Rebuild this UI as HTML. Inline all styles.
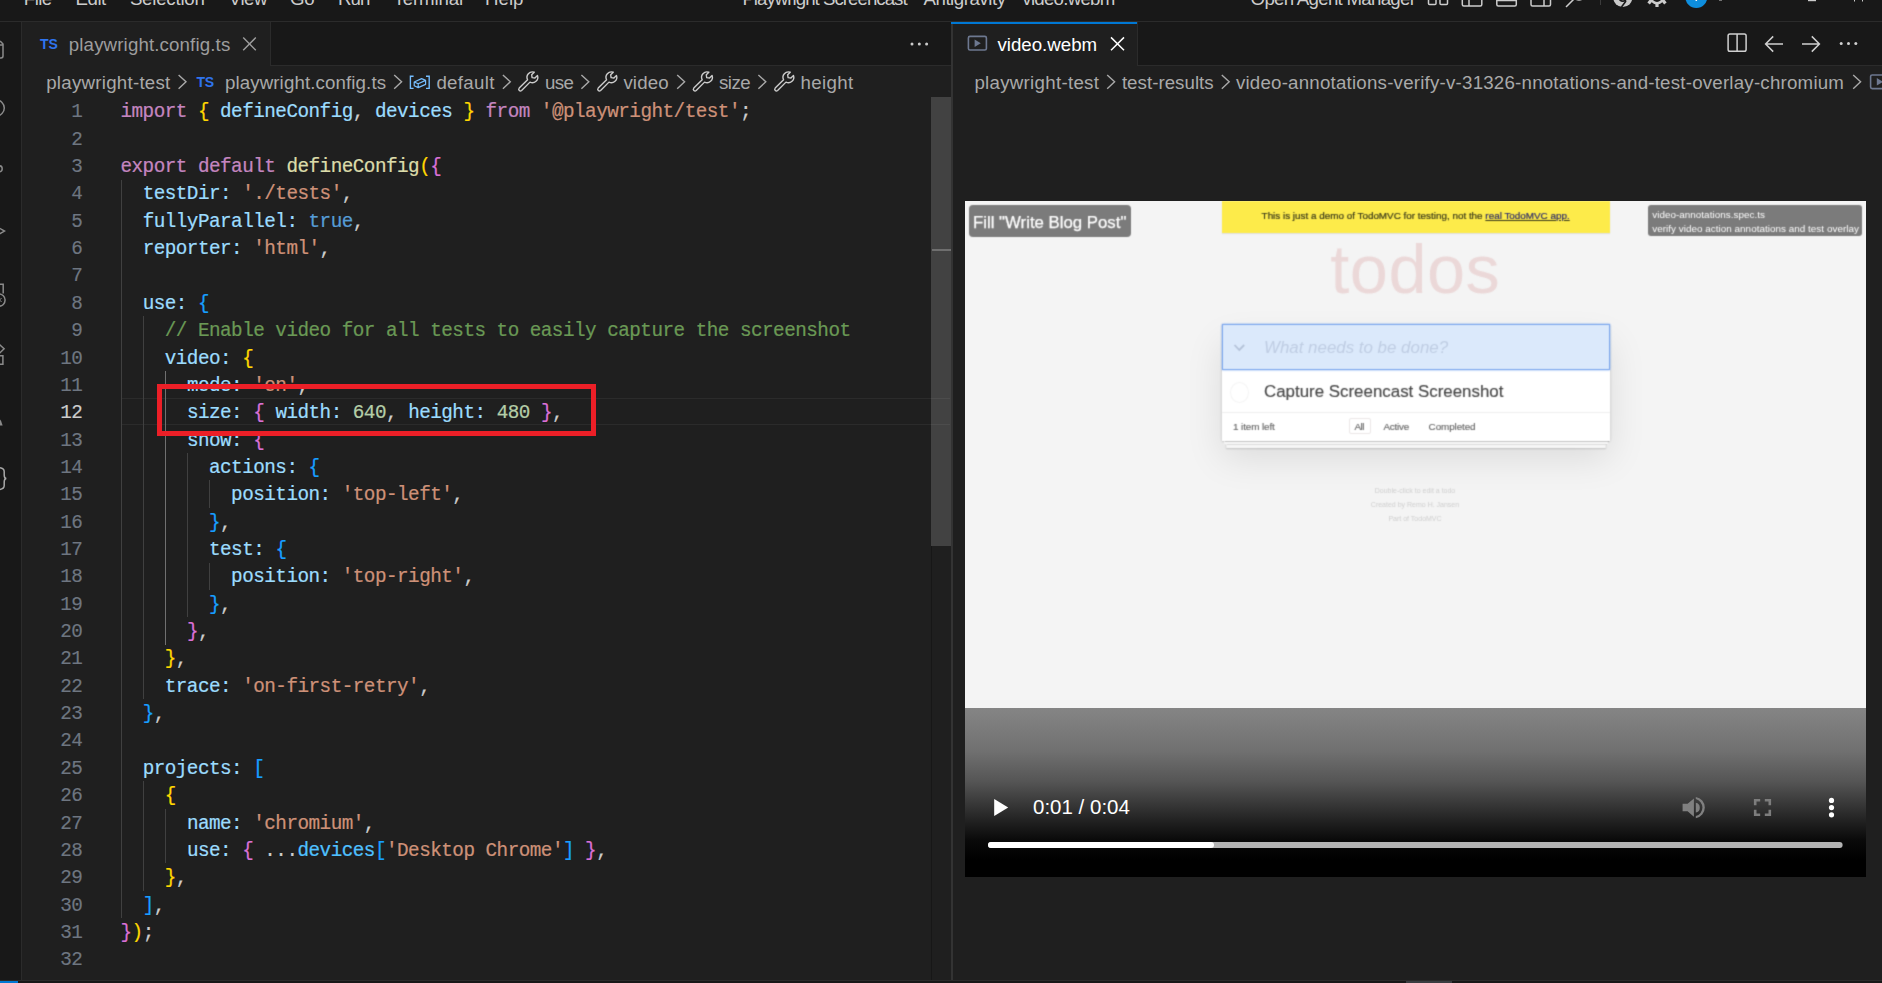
<!DOCTYPE html>
<html><head><meta charset="utf-8">
<style>
*{box-sizing:border-box;margin:0;padding:0}
html,body{width:1882px;height:983px;overflow:hidden;background:#1f1f1f}
body{position:relative;font-family:"Liberation Sans",sans-serif;color:#cccccc}
.abs{position:absolute}
.ui{position:absolute;white-space:pre;font-size:18.7px;line-height:24px;color:#cccccc}
/* chrome */
#titlebar{left:0;top:0;width:1882px;height:22px;background:#181818;border-bottom:1px solid #2b2b2b}
#activity{left:0;top:22px;width:22px;height:958px;background:#181818;border-right:1px solid #2b2b2b}
#tabsL{left:22px;top:22px;width:929px;height:44px;background:#181818;border-bottom:1px solid #2b2b2b}
#tabsR{left:953px;top:22px;width:929px;height:44px;background:#181818;border-bottom:1px solid #2b2b2b}
#sep{left:951px;top:22px;width:2px;height:958px;background:#333333}
#statusbar{left:0;top:980px;width:1882px;height:3px;background:#181818;border-top:1px solid #2b2b2b}
#remote{left:0;top:981px;width:18px;height:2px;background:#0078d4}
.tab{position:absolute;top:0;height:44px;background:#1f1f1f;border-right:1px solid #2b2b2b}
/* code */
.ln{-webkit-text-stroke:0.15px;position:absolute;left:40px;width:42.3px;text-align:right;font-family:"Liberation Mono",monospace;font-size:19.3px;letter-spacing:-0.51px;line-height:27.355px;height:27.355px;color:#6e7681;white-space:pre}
.ln.cur{color:#cccccc}
.cl{-webkit-text-stroke:0.22px;position:absolute;left:120.5px;font-family:"Liberation Mono",monospace;font-size:19.3px;letter-spacing:-0.51px;line-height:27.355px;height:27.355px;white-space:pre;color:#cccccc}
.tb{top:-13px;color:#cccccc}
.vt{white-space:pre;font-family:"Liberation Sans",sans-serif}
.ig{position:absolute;width:1px;background:#404040}
.ig.act{background:#707070}
</style></head><body>
<div id="titlebar" class="abs"></div>

<!-- title bar text (cropped) -->
<div id="tbtext" class="abs" style="left:0;top:0;width:1882px;height:21px;overflow:hidden">
 <svg class="abs" style="left:1420px;top:-12px" width="462" height="24" viewBox="1420 -12 462 24" fill="none" stroke="#cccccc" stroke-width="1.5">
  <rect x="1428.5" y="-6" width="7.5" height="10.5" rx="1"/><rect x="1440" y="-6" width="7.5" height="10.5" rx="1"/>
  <rect x="1462.3" y="-10" width="19.5" height="16" rx="1.5"/><line x1="1469" y1="-10" x2="1469" y2="6"/>
  <rect x="1496.8" y="-10" width="19.5" height="16" rx="1.5"/><line x1="1497" y1="0.5" x2="1516" y2="0.5"/>
  <rect x="1531" y="-10" width="19.5" height="16" rx="1.5"/><line x1="1544" y1="-10" x2="1544" y2="6"/>
  <line x1="1566" y1="7" x2="1574" y2="-1"/><circle cx="1579" cy="-6" r="6"/>
  <line x1="1600.5" y1="-12" x2="1600.5" y2="5" stroke="#3c3c3c" stroke-width="1"/>
  <circle cx="1622.8" cy="-2.6" r="9.6" fill="#c8c8c8" stroke="none"/><circle cx="1622.8" cy="-2.6" r="4.6" fill="#181818" stroke="none"/><circle cx="1622.8" cy="-2.6" r="2.8" fill="#c8c8c8" stroke="none"/><path d="M1626 1 L1621.5 7" stroke="#181818" stroke-width="1.6"/>
  <circle cx="1657" cy="-3" r="6.2" stroke-width="2.6"/><g stroke-width="3.2"><line x1="1657" y1="3" x2="1657" y2="7"/><line x1="1651.2" y1="0.2" x2="1648.6" y2="3.4"/><line x1="1662.8" y1="0.2" x2="1665.4" y2="3.4"/></g>
  <circle cx="1696.3" cy="-3" r="11" fill="#0e8ede" stroke="none"/>
  <line x1="1696.3" y1="-3" x2="1696.3" y2="1" stroke="#fff" stroke-width="1.5"/>
  <line x1="1719" y1="0" x2="1722" y2="0" stroke-width="1"/>
  <line x1="1808" y1="0.5" x2="1816" y2="0.5" stroke-width="1.4"/>
  <line x1="1854.5" y1="-3" x2="1854.5" y2="1.5" stroke-width="1"/><line x1="1862.5" y1="-3" x2="1862.5" y2="1.5" stroke-width="1"/>
 </svg>
</div>
<div id="activity" class="abs"></div>
<div id="tabsL" class="abs"></div>
<div id="tabsR" class="abs"></div>
<div id="sep" class="abs"></div>

<!-- tabs -->
<div class="abs" style="left:22px;top:22px;width:249px;height:44px;background:#1f1f1f;border-right:1px solid #2b2b2b"></div>
<div class="abs" style="left:953px;top:22px;width:185px;height:44px;background:#1f1f1f;border-right:1px solid #2b2b2b"></div>
<div class="abs" style="left:951px;top:22px;width:186px;height:2px;background:#0078d4;z-index:3"></div>
<span class="ui" style="left:23.8px;top:-13.5px;font-size:18.7px;color:#cccccc;letter-spacing:-0.556px;">File</span>
<span class="ui" style="left:75.4px;top:-13.5px;font-size:18.7px;color:#cccccc;letter-spacing:-0.426px;">Edit</span>
<span class="ui" style="left:129.9px;top:-13.5px;font-size:18.7px;color:#cccccc;letter-spacing:-0.232px;">Selection</span>
<span class="ui" style="left:228.8px;top:-13.5px;font-size:18.7px;color:#cccccc;letter-spacing:-0.518px;">View</span>
<span class="ui" style="left:289.9px;top:-13.5px;font-size:18.7px;color:#cccccc;letter-spacing:-0.069px;">Go</span>
<span class="ui" style="left:337.9px;top:-13.5px;font-size:18.7px;color:#cccccc;letter-spacing:-0.832px;">Run</span>
<span class="ui" style="left:393.6px;top:-13.5px;font-size:18.7px;color:#cccccc;letter-spacing:-0.166px;">Terminal</span>
<span class="ui" style="left:485.1px;top:-13.5px;font-size:18.7px;color:#cccccc;letter-spacing:-0.009px;">Help</span>
<span class="ui" style="left:742.4px;top:-13.5px;font-size:18.7px;color:#cccccc;letter-spacing:-0.981px;">Playwright Screencast</span>
<span class="ui" style="left:923.5px;top:-13.5px;font-size:18.7px;color:#cccccc;letter-spacing:-0.477px;">Antigravity</span>
<span class="ui" style="left:1022.3px;top:-13.5px;font-size:18.7px;color:#cccccc;letter-spacing:-0.742px;">video.webm</span>
<span class="ui" style="left:1250.6px;top:-13.5px;font-size:18.7px;color:#cccccc;letter-spacing:-0.726px;">Open Agent Manager</span>
<span class="ui" style="left:39.9px;top:31.5px;font-size:14px;color:#2f74ee;letter-spacing:-0.045px;font-weight:700">TS</span>
<span class="ui" style="left:68.8px;top:32.8px;font-size:18.7px;color:#9d9d9d;letter-spacing:0.134px;">playwright.config.ts</span>
<span class="ui" style="left:46.2px;top:71px;font-size:18.7px;color:#a9a9a9;letter-spacing:0.261px;">playwright-test</span>
<span class="ui" style="left:196.4px;top:70.3px;font-size:14px;color:#2f74ee;letter-spacing:-0.295px;font-weight:700">TS</span>
<span class="ui" style="left:224.9px;top:71px;font-size:18.7px;color:#a9a9a9;letter-spacing:0.119px;">playwright.config.ts</span>
<span class="ui" style="left:436.4px;top:71px;font-size:18.7px;color:#a9a9a9;letter-spacing:0.313px;">default</span>
<span class="ui" style="left:544.9px;top:71px;font-size:18.7px;color:#a9a9a9;letter-spacing:-0.614px;">use</span>
<span class="ui" style="left:623.4px;top:71px;font-size:18.7px;color:#a9a9a9;letter-spacing:0.122px;">video</span>
<span class="ui" style="left:718.9px;top:71px;font-size:18.7px;color:#a9a9a9;letter-spacing:-0.484px;">size</span>
<span class="ui" style="left:800.4px;top:71px;font-size:18.7px;color:#a9a9a9;letter-spacing:0.396px;">height</span>
<span class="ui" style="left:997.4px;top:32.8px;font-size:18.7px;color:#ffffff;letter-spacing:0.008px;">video.webm</span>
<span class="ui" style="left:974.4px;top:71px;font-size:18.7px;color:#a9a9a9;letter-spacing:0.288px;">playwright-test</span>
<span class="ui" style="left:1121.9px;top:71px;font-size:18.7px;color:#a9a9a9;letter-spacing:0.034px;">test-results</span>
<span class="ui" style="left:1235.9px;top:71px;font-size:18.7px;color:#a9a9a9;letter-spacing:0.220px;">video-annotations-verify-v-31326-nnotations-and-test-overlay-chromium</span>
<svg class="abs" style="left:0;top:0;pointer-events:none" width="1882" height="100" viewBox="0 0 1882 100" fill="none" stroke-linecap="butt" stroke-linejoin="miter">
<!-- left tab close + more -->
<path d="M243.2 37.6 L255.8 50.2 M255.8 37.6 L243.2 50.2" stroke="#9d9d9d" stroke-width="1.4"/>
<g fill="#cccccc"><circle cx="912" cy="44" r="1.5"/><circle cx="919.3" cy="44" r="1.5"/><circle cx="926.6" cy="44" r="1.5"/></g>
<!-- left breadcrumbs -->
<g transform="translate(178,74.5)"><polyline points="0.6,0.4 8,7.3 0.6,14.2" stroke="#a9a9a9" stroke-width="1.4" fill="none"/></g>
<g transform="translate(393.6,74.5)"><polyline points="0.6,0.4 8,7.3 0.6,14.2" stroke="#a9a9a9" stroke-width="1.4" fill="none"/></g>
<g transform="translate(502.3,74.5)"><polyline points="0.6,0.4 8,7.3 0.6,14.2" stroke="#a9a9a9" stroke-width="1.4" fill="none"/></g>
<g transform="translate(580.8,74.5)"><polyline points="0.6,0.4 8,7.3 0.6,14.2" stroke="#a9a9a9" stroke-width="1.4" fill="none"/></g>
<g transform="translate(676.6,74.5)"><polyline points="0.6,0.4 8,7.3 0.6,14.2" stroke="#a9a9a9" stroke-width="1.4" fill="none"/></g>
<g transform="translate(757.8,74.5)"><polyline points="0.6,0.4 8,7.3 0.6,14.2" stroke="#a9a9a9" stroke-width="1.4" fill="none"/></g>
<g stroke="#75beff" stroke-width="1.4" fill="none">
 <path d="M413.6 76.3 H410.4 V88.4 H413.6"/><path d="M426 76.3 H429.2 V88.4 H426"/>
 <path d="M414.2 82 L421.6 78.6 L425.6 80.4 V84.4 L418.2 87.6 L414.2 85.8 Z M414.2 82 L418.2 83.8 L425.6 80.4 M418.2 83.8 V87.6" stroke-width="1.2" stroke-linejoin="round"/>
</g>
<g transform="translate(517.8,70.9)"><path d="M12.17 11.22 L3.8 19.6 A1.7 1.7 0 0 1 1.4 17.2 L9.78 8.83 A5.4 5.4 0 0 1 16.45 1.33 L13.9 3.88 L14.3 6.7 L17.12 7.1 L19.67 4.55 A5.4 5.4 0 0 1 12.17 11.22 Z" stroke="#cccccc" stroke-width="1.4" fill="none" stroke-linejoin="round"/></g>
<g transform="translate(596.8,70.9)"><path d="M12.17 11.22 L3.8 19.6 A1.7 1.7 0 0 1 1.4 17.2 L9.78 8.83 A5.4 5.4 0 0 1 16.45 1.33 L13.9 3.88 L14.3 6.7 L17.12 7.1 L19.67 4.55 A5.4 5.4 0 0 1 12.17 11.22 Z" stroke="#cccccc" stroke-width="1.4" fill="none" stroke-linejoin="round"/></g>
<g transform="translate(692.4,70.9)"><path d="M12.17 11.22 L3.8 19.6 A1.7 1.7 0 0 1 1.4 17.2 L9.78 8.83 A5.4 5.4 0 0 1 16.45 1.33 L13.9 3.88 L14.3 6.7 L17.12 7.1 L19.67 4.55 A5.4 5.4 0 0 1 12.17 11.22 Z" stroke="#cccccc" stroke-width="1.4" fill="none" stroke-linejoin="round"/></g>
<g transform="translate(773.8,70.9)"><path d="M12.17 11.22 L3.8 19.6 A1.7 1.7 0 0 1 1.4 17.2 L9.78 8.83 A5.4 5.4 0 0 1 16.45 1.33 L13.9 3.88 L14.3 6.7 L17.12 7.1 L19.67 4.55 A5.4 5.4 0 0 1 12.17 11.22 Z" stroke="#cccccc" stroke-width="1.4" fill="none" stroke-linejoin="round"/></g>
<!-- right tab -->
<g transform="translate(967.6,35.6)"><rect x="0.8" y="0.8" width="18" height="13.6" rx="1.6" stroke="#6d7890" stroke-width="1.6" fill="none"/><path d="M7 3.9 L13.2 7.6 L7 11.3 Z" fill="#6d7890" stroke="none"/></g>
<path d="M1111 37.4 L1124 50.2 M1124 37.4 L1111 50.2" stroke="#ffffff" stroke-width="1.5"/>
<g stroke="#d0d0d0" stroke-width="1.5" fill="none">
 <rect x="1728.1" y="33.9" width="18" height="17.4" rx="1.8"/><line x1="1737.1" y1="34" x2="1737.1" y2="51.3"/>
 <path d="M1783 44 H1765.6 M1773.2 36.4 L1765.6 44 L1773.2 51.6"/>
 <path d="M1802 44 H1819.4 M1811.8 36.4 L1819.4 44 L1811.8 51.6"/>
</g>
<g fill="#d0d0d0"><circle cx="1841.2" cy="43.6" r="1.5"/><circle cx="1848.5" cy="43.6" r="1.5"/><circle cx="1855.8" cy="43.6" r="1.5"/></g>
<!-- right breadcrumbs -->
<g transform="translate(1106.6,74.5)"><polyline points="0.6,0.4 8,7.3 0.6,14.2" stroke="#a9a9a9" stroke-width="1.4" fill="none"/></g>
<g transform="translate(1221.2,74.5)"><polyline points="0.6,0.4 8,7.3 0.6,14.2" stroke="#a9a9a9" stroke-width="1.4" fill="none"/></g>
<g transform="translate(1852.6,74.5)"><polyline points="0.6,0.4 8,7.3 0.6,14.2" stroke="#a9a9a9" stroke-width="1.4" fill="none"/></g>
<g transform="translate(1869.8,74.2)"><rect x="0.8" y="0.8" width="18" height="13.6" rx="1.6" stroke="#6d7890" stroke-width="1.6" fill="none"/><path d="M7 3.9 L13.2 7.6 L7 11.3 Z" fill="#6d7890" stroke="none"/></g>
</svg>
<!-- activity bar icon fragments -->
<svg class="abs" style="left:0;top:22px" width="21" height="500" viewBox="0 22 21 500" fill="none" stroke="#8a8a8a" stroke-width="1.5">
 <path d="M-4 41.5 H0.6 L3 44 V56 Q3 57.9 1 57.9 H-4 M-4 45 H2.8"/>
 <circle cx="-3.6" cy="108" r="7.9"/>
 <circle cx="-0.8" cy="168.8" r="3"/>
 <path d="M-4 226.2 L4.5 231.1 L-4 236"/>
 <path d="M-3 284.2 H3.2 V293.6"/><circle cx="-1" cy="300.1" r="6.1"/><path d="M-2.4 298 L1.6 302 M1.6 298 L-2.4 302" stroke-width="1"/>
 <path d="M-1.2 343.8 L4.1 348.8 L-1.2 353.8 M-4 355.7 H2.9 V364.3 H-4"/>
 <path d="M-3 425.4 L0.6 419.4 L2.6 425.4 Z" fill="#8a8a8a" stroke="none"/>
 <path d="M-3 467.5 Q4.2 467.5 4.2 471.5 V475 Q4.2 478.5 6.4 478.5 Q4.2 478.5 4.2 482 V485.5 Q4.2 489.7 -3 489.7" stroke="#a8a8a8"/>
</svg>

<!-- current line -->

<!-- scrollbar / overview ruler -->
<div class="abs" style="left:931px;top:97px;width:20px;height:449px;background:#424242"></div>
<div class="abs" style="left:932px;top:249px;width:19px;height:2px;background:#6f6f6f"></div>
<div class="abs" style="left:121px;top:398px;width:829px;height:27px;border-top:1px solid rgba(255,255,255,0.055);border-bottom:1px solid rgba(255,255,255,0.055)"></div>
<div class="abs" style="left:931px;top:546px;width:1px;height:434px;background:#171717"></div>
<div class="ln" style="top:99.30px">1</div>
<div class="cl" style="top:99.30px"><span style="color:#c586c0">import</span> <span style="color:#ffd700">{</span> <span style="color:#9cdcfe">defineConfig</span><span style="color:#cccccc">, </span><span style="color:#9cdcfe">devices</span> <span style="color:#ffd700">}</span> <span style="color:#c586c0">from</span> <span style="color:#ce9178">'@playwright/test'</span><span style="color:#cccccc">;</span></div>
<div class="ln" style="top:126.66px">2</div>
<div class="ln" style="top:154.01px">3</div>
<div class="cl" style="top:154.01px"><span style="color:#c586c0">export</span> <span style="color:#c586c0">default</span> <span style="color:#dcdcaa">defineConfig</span><span style="color:#ffd700">(</span><span style="color:#da70d6">{</span></div>
<div class="ln" style="top:181.37px">4</div>
<div class="cl" style="top:181.37px">  <span style="color:#9cdcfe">testDir:</span> <span style="color:#ce9178">'./tests'</span><span style="color:#cccccc">,</span></div>
<div class="ln" style="top:208.72px">5</div>
<div class="cl" style="top:208.72px">  <span style="color:#9cdcfe">fullyParallel:</span> <span style="color:#569cd6">true</span><span style="color:#cccccc">,</span></div>
<div class="ln" style="top:236.07px">6</div>
<div class="cl" style="top:236.07px">  <span style="color:#9cdcfe">reporter:</span> <span style="color:#ce9178">'html'</span><span style="color:#cccccc">,</span></div>
<div class="ln" style="top:263.43px">7</div>
<div class="ln" style="top:290.79px">8</div>
<div class="cl" style="top:290.79px">  <span style="color:#9cdcfe">use:</span> <span style="color:#179fff">{</span></div>
<div class="ln" style="top:318.14px">9</div>
<div class="cl" style="top:318.14px">    <span style="color:#6a9955">// Enable video for all tests to easily capture the screenshot</span></div>
<div class="ln" style="top:345.50px">10</div>
<div class="cl" style="top:345.50px">    <span style="color:#9cdcfe">video:</span> <span style="color:#ffd700">{</span></div>
<div class="ln" style="top:372.85px">11</div>
<div class="cl" style="top:372.85px">      <span style="color:#9cdcfe">mode:</span> <span style="color:#ce9178">'on'</span><span style="color:#cccccc">,</span></div>
<div class="ln cur" style="top:400.21px">12</div>
<div class="cl" style="top:400.21px">      <span style="color:#9cdcfe">size:</span> <span style="color:#da70d6">{</span> <span style="color:#9cdcfe">width:</span> <span style="color:#b5cea8">640</span><span style="color:#cccccc">, </span><span style="color:#9cdcfe">height:</span> <span style="color:#b5cea8">480</span> <span style="color:#da70d6">}</span><span style="color:#cccccc">,</span></div>
<div class="ln" style="top:427.56px">13</div>
<div class="cl" style="top:427.56px">      <span style="color:#9cdcfe">show:</span> <span style="color:#da70d6">{</span></div>
<div class="ln" style="top:454.92px">14</div>
<div class="cl" style="top:454.92px">        <span style="color:#9cdcfe">actions:</span> <span style="color:#179fff">{</span></div>
<div class="ln" style="top:482.27px">15</div>
<div class="cl" style="top:482.27px">          <span style="color:#9cdcfe">position:</span> <span style="color:#ce9178">'top-left'</span><span style="color:#cccccc">,</span></div>
<div class="ln" style="top:509.62px">16</div>
<div class="cl" style="top:509.62px">        <span style="color:#179fff">}</span><span style="color:#cccccc">,</span></div>
<div class="ln" style="top:536.98px">17</div>
<div class="cl" style="top:536.98px">        <span style="color:#9cdcfe">test:</span> <span style="color:#179fff">{</span></div>
<div class="ln" style="top:564.34px">18</div>
<div class="cl" style="top:564.34px">          <span style="color:#9cdcfe">position:</span> <span style="color:#ce9178">'top-right'</span><span style="color:#cccccc">,</span></div>
<div class="ln" style="top:591.69px">19</div>
<div class="cl" style="top:591.69px">        <span style="color:#179fff">}</span><span style="color:#cccccc">,</span></div>
<div class="ln" style="top:619.04px">20</div>
<div class="cl" style="top:619.04px">      <span style="color:#da70d6">}</span><span style="color:#cccccc">,</span></div>
<div class="ln" style="top:646.40px">21</div>
<div class="cl" style="top:646.40px">    <span style="color:#ffd700">}</span><span style="color:#cccccc">,</span></div>
<div class="ln" style="top:673.75px">22</div>
<div class="cl" style="top:673.75px">    <span style="color:#9cdcfe">trace:</span> <span style="color:#ce9178">'on-first-retry'</span><span style="color:#cccccc">,</span></div>
<div class="ln" style="top:701.11px">23</div>
<div class="cl" style="top:701.11px">  <span style="color:#179fff">}</span><span style="color:#cccccc">,</span></div>
<div class="ln" style="top:728.46px">24</div>
<div class="ln" style="top:755.82px">25</div>
<div class="cl" style="top:755.82px">  <span style="color:#9cdcfe">projects:</span> <span style="color:#179fff">[</span></div>
<div class="ln" style="top:783.17px">26</div>
<div class="cl" style="top:783.17px">    <span style="color:#ffd700">{</span></div>
<div class="ln" style="top:810.53px">27</div>
<div class="cl" style="top:810.53px">      <span style="color:#9cdcfe">name:</span> <span style="color:#ce9178">'chromium'</span><span style="color:#cccccc">,</span></div>
<div class="ln" style="top:837.88px">28</div>
<div class="cl" style="top:837.88px">      <span style="color:#9cdcfe">use:</span> <span style="color:#da70d6">{</span><span style="color:#cccccc"> ...</span><span style="color:#4fc1ff">devices</span><span style="color:#179fff">[</span><span style="color:#ce9178">'Desktop Chrome'</span><span style="color:#179fff">]</span> <span style="color:#da70d6">}</span><span style="color:#cccccc">,</span></div>
<div class="ln" style="top:865.24px">29</div>
<div class="cl" style="top:865.24px">    <span style="color:#ffd700">}</span><span style="color:#cccccc">,</span></div>
<div class="ln" style="top:892.59px">30</div>
<div class="cl" style="top:892.59px">  <span style="color:#179fff">]</span><span style="color:#cccccc">,</span></div>
<div class="ln" style="top:919.95px">31</div>
<div class="cl" style="top:919.95px"><span style="color:#da70d6">}</span><span style="color:#ffd700">)</span><span style="color:#cccccc">;</span></div>
<div class="ln" style="top:947.30px">32</div>
<div class="ig" style="left:120.5px;top:179.56px;height:738.59px"></div>
<div class="ig" style="left:142.6px;top:316.34px;height:382.97px"></div>
<div class="ig act" style="left:164.8px;top:371.05px;height:273.55px"></div>
<div class="ig" style="left:186.9px;top:453.12px;height:164.13px"></div>
<div class="ig" style="left:209.1px;top:480.47px;height:27.36px"></div>
<div class="ig" style="left:209.1px;top:562.54px;height:27.36px"></div>
<div class="ig" style="left:142.6px;top:781.38px;height:109.42px"></div>
<div class="ig" style="left:164.8px;top:808.73px;height:54.71px"></div>
<!-- red annotation box -->
<div class="abs" style="left:157px;top:384px;width:439px;height:52px;border:5px solid #ec1f27"></div>
<!-- video -->
<div id="video" class="abs" style="left:965px;top:201px;width:901px;height:676px;background:#f4f4f4;overflow:hidden">
 <svg width="0" height="0" style="position:absolute"><filter id="soft" x="0" y="0" width="100%" height="100%" color-interpolation-filters="sRGB"><feConvolveMatrix order="3" kernelMatrix="0.028 0.111 0.028 0.111 0.444 0.111 0.028 0.111 0.028" edgeMode="duplicate" preserveAlpha="false"/></filter></svg>
 <div><div id="vpage" class="abs" style="left:0;top:0;width:901px;height:520px;filter:url(#soft)">
  <!-- yellow banner -->
  <div class="abs" style="left:257px;top:0;width:388px;height:31.6px;background:#fdeb4a;box-shadow:0 1px 1px rgba(0,0,0,0.08)"></div>
  <div class="abs vt" style="left:296.6px;top:7.5px;font-size:9.9px;line-height:14px;color:#38381a;letter-spacing:0px;-webkit-text-stroke:0.2px #38381a">This is just a demo of TodoMVC for testing, not the <span style="color:#1a1a9c;text-decoration:underline">real TodoMVC app.</span></div>
  <!-- todos heading -->
  <div class="abs vt" style="left:365.3px;top:28.5px;font-size:68.5px;line-height:80px;color:#ebd8d8;letter-spacing:0.5px">todos</div>
  <!-- card shadow + stacked pages -->
  <div class="abs" style="left:257px;top:123px;width:388px;height:117.4px;background:#fff;box-shadow:0 0.7px 0.8px rgba(0,0,0,0.2),0 5.6px 0 -2.1px #f6f6f6,0 6.3px 0.8px -2.1px rgba(0,0,0,0.2),0 11.3px 0 -4.2px #f6f6f6,0 12px 1.4px -4.2px rgba(0,0,0,0.2),0 1.4px 2.8px rgba(0,0,0,0.2),0 17.6px 35px rgba(0,0,0,0.1)"></div>
  <!-- input -->
  <div class="abs" style="left:257px;top:123px;width:388px;height:46px;background:#dbe9fb;border:1.6px solid #7aa6ee;box-shadow:0 0 2px #8db4f3"></div>
  <svg class="abs" style="left:268px;top:141px" width="14" height="12" viewBox="0 0 14 12" fill="none" stroke="#b4c2d8" stroke-width="1.8"><path d="M1.5 3 L6.3 8 L11.2 3"/></svg>
  <div class="abs vt" style="left:299px;top:135.5px;font-size:16.9px;line-height:22px;font-style:italic;color:#bfcde3;letter-spacing:0px">What needs to be done?</div>
  <!-- item -->
  <div class="abs" style="left:264.5px;top:180.5px;width:19px;height:21px;border-radius:50%;border:1px solid #f4f4f4"></div>
  <div class="abs vt" style="left:299px;top:179.5px;font-size:16.9px;line-height:22px;color:#484848;-webkit-text-stroke:0.15px #484848">Capture Screencast Screenshot</div>
  <div class="abs" style="left:257px;top:211.4px;width:388px;height:1px;background:#efefef"></div>
  <!-- footer -->
  <div class="abs vt" style="left:268px;top:219.5px;font-size:9.9px;line-height:12px;color:#666666;-webkit-text-stroke:0.15px #666;letter-spacing:-0.1px">1 item left</div>
  <div class="abs" style="left:383.6px;top:217.4px;width:22.6px;height:16px;border:1px solid #ebe7e7;border-radius:2px"></div>
  <div class="abs vt" style="left:389.4px;top:219.5px;font-size:9.9px;line-height:12px;color:#666666;-webkit-text-stroke:0.15px #666;letter-spacing:-0.45px">All</div>
  <div class="abs vt" style="left:418.4px;top:219.5px;font-size:9.9px;line-height:12px;color:#666666;-webkit-text-stroke:0.15px #666;letter-spacing:-0.2px">Active</div>
  <div class="abs vt" style="left:463.6px;top:219.5px;font-size:9.9px;line-height:12px;color:#666666;-webkit-text-stroke:0.15px #666;letter-spacing:-0.1px">Completed</div>
  <!-- info -->
  <div class="abs vt" style="left:350px;top:282.8px;width:200px;text-align:center;font-size:7px;line-height:13.9px;color:#cfcfcf">Double-click to edit a todo<br>Created by Remo H. Jansen<br>Part of TodoMVC</div>
 </div></div>
 <div class="abs" style="left:0;top:0;width:901px;height:60px;filter:url(#soft)">
  <!-- annotation labels -->
  <div class="abs" style="left:4.4px;top:4.4px;width:162px;height:32px;background:#7b7b7b;border-radius:4px"></div>
  <div class="abs vt" style="left:8px;top:10.5px;font-size:16.8px;line-height:22px;color:#ffffff;-webkit-text-stroke:0.25px #fff">Fill "Write Blog Post"</div>
  <div class="abs" style="left:682.7px;top:4.2px;width:214.3px;height:30.8px;background:#7b7b7b;border-radius:3px"></div>
  <div class="abs vt" style="left:687.2px;top:7.3px;font-size:9.9px;line-height:13.3px;color:#ffffff;letter-spacing:0.03px">video-annotations.spec.ts<br>verify video action annotations and test overlay</div>
 </div>
 <!-- controls -->
 <div class="abs" style="left:0;top:506.6px;width:901px;height:169.4px;background:linear-gradient(to bottom,#858585 0%,#707070 25.7%,#555555 43.5%,#3a3a3a 55.7%,#202020 67.5%,#0a0a0a 78%,#000 90%)"></div>
 <svg class="abs" style="left:0;top:580px" width="901" height="96" viewBox="965 781 901 96">
  <path d="M994.2 799 L1008.2 807.5 L994.2 816 Z" fill="#fff"/>
  <rect x="988" y="842" width="854.6" height="6" rx="3" fill="#b4b4b4"/>
  <rect x="988" y="842" width="226" height="6" rx="3" fill="#fff"/>
  <g fill="#808080">
   <path d="M1682.6 803.7 H1687.6 L1693.9 798.4 V816.8 L1687.6 811.3 H1682.6 Z"/>
   <path d="M1695.8 802.8 A5 5 0 0 1 1695.8 812.6 Z"/>
   <path d="M1695.8 796.9 A10.8 10.8 0 0 1 1695.8 818.2 V816 A8.7 8.7 0 0 0 1695.8 799.1 Z"/>
  </g>
  <g fill="none" stroke="#7d7d7d" stroke-width="2.6">
   <path d="M1755.2 805.3 V800.3 H1760.2 M1764.8 800.3 H1769.8 V805.3 M1769.8 809.8 V814.8 H1764.8 M1760.2 814.8 H1755.2 V809.8"/>
  </g>
  <g fill="#fff"><circle cx="1831.5" cy="800.4" r="2.6"/><circle cx="1831.5" cy="807.6" r="2.6"/><circle cx="1831.5" cy="814.8" r="2.6"/></g>
 </svg>
 <div class="abs vt" style="left:68px;top:594px;font-size:20.5px;line-height:24px;color:#fff">0:01 / 0:04</div>
</div>

<div id="statusbar" class="abs"></div>
<div id="remote" class="abs"></div>
<div class="abs" style="left:1406px;top:981px;width:46px;height:2px;background:#3a3d41"></div>
</body></html>
